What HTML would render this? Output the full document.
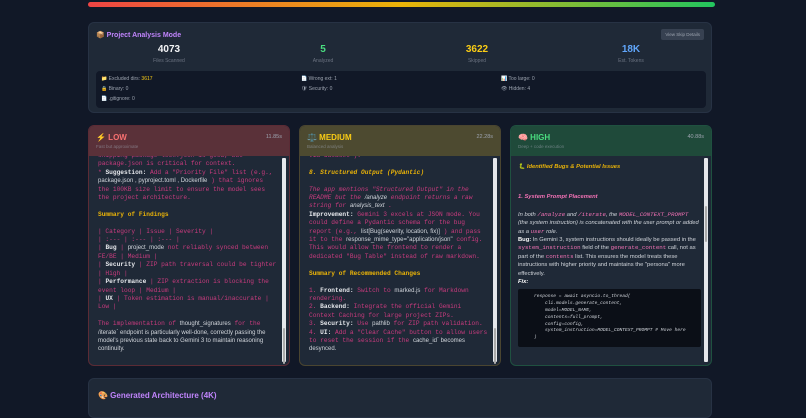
<!DOCTYPE html>
<html><head><meta charset="utf-8"><style>
*{box-sizing:border-box;margin:0;padding:0}
body{width:806px;height:407px;overflow:hidden;background:#111827;font-family:"Liberation Sans","Noto Sans CJK SC",sans-serif;color:#e5e7eb;position:relative}
.bar{position:absolute;left:88px;top:2px;width:627px;height:5px;border-radius:3px;background:linear-gradient(90deg,#ef4444,#eab308 50%,#22c55e)}
.panel{position:absolute;left:88px;width:624px;background:#1f2937;border:1px solid #273244;border-radius:6px}
.ttl{color:#c084fc;font-weight:bold;font-size:7px}
.num{position:absolute;width:100px;text-align:center;font-size:10px;font-weight:bold;line-height:10px;top:22px}
.lab{position:absolute;width:100px;text-align:center;font-size:5px;line-height:5px;color:#6b7280;top:36px}
.skip{position:absolute;height:37px;background:#111827;border-radius:4px;font-size:5px;color:#9ca3af}
.skip div{position:absolute}
.card{position:absolute;top:125px;width:202px;height:241px;border-radius:6px;background:#1f2937;overflow:hidden}
.hd{height:30px;padding:7px 7px;position:relative}
.hd .n{font-weight:bold;font-size:8px}
.hd .s{font-size:4.5px;color:#9ca3af;opacity:.6;margin-top:2px}
.hd .t{position:absolute;right:7px;top:8px;font-size:5.5px;color:#9ca3af}
.body{position:absolute;left:0;right:0;top:30px;bottom:0;padding:0 12px 0 9px;font-family:"Liberation Mono",monospace;font-size:6.2px;line-height:8.4px;color:#c93b7e;overflow:hidden}
.sb{position:absolute;right:3px;top:32px;bottom:3px;width:4px;background:#e5e7eb;border-radius:1px}
.sb i{position:absolute;left:1px;width:2px;background:#aaa;border-radius:1px}
.w{color:#e5e7eb;font-weight:bold}
.sans{font-family:"Liberation Sans",sans-serif;color:#d1d5db;font-size:6px}
.y{color:#eab308;font-weight:bold}
</style></head><body>
<div class="bar"></div>
<div class="panel" style="top:22px;height:91px">
 <div class="ttl" style="position:absolute;left:7px;top:8px">📦 Project Analysis Mode</div>
 <div style="position:absolute;right:7px;top:6px;background:#374151;color:#9ca3af;font-size:4.5px;padding:3px 4px;border-radius:2px">View Skip Details</div>
 <div class="num" style="left:30px;color:#f3f4f6">4073</div><div class="lab" style="left:30px">Files Scanned</div>
 <div class="num" style="left:184px;color:#4ade80">5</div><div class="lab" style="left:184px">Analyzed</div>
 <div class="num" style="left:338px;color:#facc15">3622</div><div class="lab" style="left:338px">Skipped</div>
 <div class="num" style="left:492px;color:#60a5fa">18K</div><div class="lab" style="left:492px">Est. Tokens</div>
 <div class="skip" style="left:7px;top:48px;width:610px">
  <div style="left:5px;top:5px">📁 Excluded dirs: <span style="color:#facc15">3617</span></div>
  <div style="left:205px;top:5px">📄 Wrong ext: 1</div>
  <div style="left:405px;top:5px">📊 Too large: 0</div>
  <div style="left:5px;top:15px">🔒 Binary: 0</div>
  <div style="left:205px;top:15px">🛡 Security: 0</div>
  <div style="left:405px;top:15px">👁 Hidden: 4</div>
  <div style="left:5px;top:25px">📄 .gitignore: 0</div>
 </div>
</div>

<div class="card" style="left:88px;border:1px solid #5b2b35">
 <div class="hd" style="background:#5a3139"><div class="n" style="color:#f87171">⚡ LOW</div><div class="s">Fast but approximate</div><div class="t">11.85s</div></div>
 <div class="body">
 <div style="margin-top:-4px">skipping package-lock.json is good, but package.json is critical for context.<br>* <span class="w">Suggestion:</span> Add a "Priority File" list (e.g., <span class="sans">package.json , pyproject.toml , Dockerfile</span> ) that ignores the 100KB size limit to ensure the model sees the project architecture.<br><br><span class="y">Summary of Findings</span><br><br>| Category | Issue | Severity |<br>| :--- | :--- | :--- |<br>| <span class="w">Bug</span> | <span class="sans">project_mode</span> not reliably synced between FE/BE | Medium |<br>| <span class="w">Security</span> | ZIP path traversal could be tighter | High |<br>| <span class="w">Performance</span> | ZIP extraction is blocking the event loop | Medium |<br>| <span class="w">UX</span> | Token estimation is manual/inaccurate | Low |<br><br>The implementation of <span class="sans">thought_signatures</span> for the <span class="sans">/iterate` endpoint is particularly well-done, correctly passing the model's previous state back to Gemini 3 to maintain reasoning continuity.</span></div>
 </div>
 <div class="sb"><i style="top:170px;height:36px"></i></div>
</div>

<div class="card" style="left:299px;border:1px solid #4a4530">
 <div class="hd" style="background:#4d4a30"><div class="n" style="color:#facc15">⚖️ MEDIUM</div><div class="s">Balanced analysis</div><div class="t">22.28s</div></div>
 <div class="body" style="font-style:italic">
 <div style="margin-top:-4px;font-style:normal">via  dataset ).</div><br><span class="y">8. Structured Output (Pydantic)</span><br><br>The app mentions "Structured Output" in the README but the <span class="sans">/analyze</span> endpoint returns a raw string for <span class="sans">analysis_text</span> .<br><span style="font-style:normal"><span class="w">Improvement:</span> Gemini 3 excels at JSON mode. You could define a Pydantic schema for the bug report (e.g., <span class="sans">list[Bug(severity, location, fix)]</span> ) and pass it to the <span class="sans">response_mime_type="application/json"</span> config. This would allow the frontend to render a dedicated "Bug Table" instead of raw markdown.<br><br><span class="y">Summary of Recommended Changes</span><br><br>1. <span class="w">Frontend:</span> Switch to <span class="sans">marked.js</span> for Markdown rendering.<br>2. <span class="w">Backend:</span> Integrate the official Gemini Context Caching for large project ZIPs.<br>3. <span class="w">Security:</span> Use <span class="sans">pathlib</span> for ZIP path validation.<br>4. <span class="w">UI:</span> Add a "Clear Cache" button to allow users to reset the session if the <span class="sans">cache_id` becomes desynced.</span></span>
 </div>
 <div class="sb"><i style="top:170px;height:36px"></i></div>
</div>

<div class="card" style="left:510px;border:1px solid #1f5140">
 <div class="hd" style="background:#1f4a3a"><div class="n" style="color:#4ade80">🧠 HIGH</div><div class="s">Deep + code execution</div><div class="t">40.88s</div></div>
 <div class="body" style="font-family:'Liberation Sans',sans-serif;font-size:5.8px;color:#d1d5db;line-height:8.4px;padding-left:7px">
 <div style="margin-top:7px;color:#eab308;font-weight:bold;font-style:italic">🐛 Identified Bugs &amp; Potential Issues</div>
 <div style="margin-top:22px;color:#f472b6;font-weight:bold;font-style:italic">1. System Prompt Placement</div>
 <div style="margin-top:9px;font-style:italic">In both <span style="color:#f472b6;font-family:'Liberation Mono'">/analyze</span> and <span style="color:#f472b6;font-family:'Liberation Mono'">/iterate</span>, the <span style="color:#f472b6;font-family:'Liberation Mono'">MODEL_CONTEXT_PROMPT</span> (the system instruction) is concatenated with the user prompt or added as a <span style="color:#f472b6;font-family:'Liberation Mono'">user</span> role.</div>
 <div><b style="color:#fff">Bug:</b> In Gemini 3, system instructions should ideally be passed in the <span style="color:#f472b6;font-family:'Liberation Mono'">system_instruction</span> field of the <span style="color:#f472b6;font-family:'Liberation Mono'">generate_content</span> call, not as part of the <span style="color:#f472b6;font-family:'Liberation Mono'">contents</span> list. This ensures the model treats these instructions with higher priority and maintains the "persona" more effectively.</div>
 <div style="font-weight:bold;font-style:italic;color:#fff">Fix:</div>
 <div style="margin-top:3px;margin-right:-2px;background:#0b0f17;border-radius:2px;height:58px;padding:5px 0 0 16px;font-family:'Liberation Mono',monospace;font-size:4.6px;line-height:6.8px;color:#d1d5db;font-style:italic;white-space:pre;overflow:hidden">response = await asyncio.to_thread(
    cli.models.generate_content,
    model=MODEL_NAME,
    contents=full_prompt,
    config=config,
    system_instruction=MODEL_CONTEXT_PROMPT # Move here
)</div>
 </div>
 <div class="sb"><i style="top:48px;height:36px"></i></div>
</div>

<div class="panel" style="top:378px;height:40px">
 <div class="ttl" style="position:absolute;left:9px;top:12px;font-size:8px">🎨 Generated Architecture (4K)</div>
</div>
</body></html>
